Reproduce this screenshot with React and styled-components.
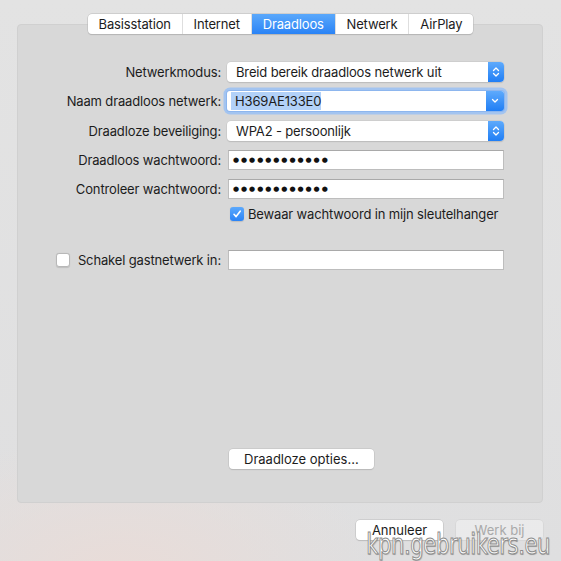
import styled, { createGlobalStyle } from "styled-components";

const GlobalStyle = createGlobalStyle`
  html, body {
    margin: 0;
    padding: 0;
  }
  body {
    font-family: Inter, "Liberation Sans", sans-serif;
    font-size: 13px;
    letter-spacing: -0.15px;
    color: #1c1c1c;
  }
`;

const tabs = ["Basisstation", "Internet", "Draadloos", "Netwerk", "AirPlay"];

function Chevrons({ single }) {
  return (
    <svg width="8" height="12" viewBox="0 0 8 12">
      {single ? (
        <path d="M1.5 4.5 L4 7 L6.5 4.5" fill="none" stroke="#fff" strokeWidth="1.3" strokeLinecap="round" strokeLinejoin="round" />
      ) : (
        <>
          <path d="M1.5 4.5 L4 2 L6.5 4.5" fill="none" stroke="#fff" strokeWidth="1.3" strokeLinecap="round" strokeLinejoin="round" />
          <path d="M1.5 7.5 L4 10 L6.5 7.5" fill="none" stroke="#fff" strokeWidth="1.3" strokeLinecap="round" strokeLinejoin="round" />
        </>
      )}
    </svg>
  );
}

export default function App() {
  return (
    <>
      <GlobalStyle />
      <Window>
        <TabBar>
          {tabs.map((t) => (
            <Tab key={t} $active={t === "Draadloos"}>{t}</Tab>
          ))}
        </TabBar>

        <Panel>
          <Form>
            <Label>Netwerkmodus:</Label>
            <Popup>
              <PopupText>Breid bereik draadloos netwerk uit</PopupText>
              <Arrows><Chevrons /></Arrows>
            </Popup>

            <Label>Naam draadloos netwerk:</Label>
            <Combo>
              <PopupText><Selected>H369AE133E0</Selected></PopupText>
              <Arrows $combo><Chevrons single /></Arrows>
            </Combo>

            <Label>Draadloze beveiliging:</Label>
            <Popup>
              <PopupText>WPA2 - persoonlijk</PopupText>
              <Arrows><Chevrons /></Arrows>
            </Popup>

            <Label>Draadloos wachtwoord:</Label>
            <Field><Dots>●●●●●●●●●●●●</Dots></Field>

            <Label>Controleer wachtwoord:</Label>
            <Field><Dots>●●●●●●●●●●●●</Dots></Field>

            <span />
            <CheckRow>
              <Check $checked>
                <svg width="10" height="10" viewBox="0 0 10 10">
                  <path d="M2 5.3 L4.1 7.6 L8.2 2.2" fill="none" stroke="#fff" strokeWidth="1.6" strokeLinecap="round" strokeLinejoin="round" />
                </svg>
              </Check>
              Bewaar wachtwoord in mijn sleutelhanger
            </CheckRow>

            <GuestLabel>
              <Check />
              <span>Schakel gastnetwerk in:</span>
            </GuestLabel>
            <Field $guest />
          </Form>

          <Footer>
            <Button>Draadloze opties...</Button>
          </Footer>
        </Panel>

        <Actions>
          <Button $wide>Annuleer</Button>
          <Button $wide disabled>Werk bij</Button>
        </Actions>

        <Watermark>kpn.gebruikers.eu</Watermark>
      </Window>
    </>
  );
}

const Window = styled.div`
  position: relative;
  width: 561px;
  height: 561px;
  box-sizing: border-box;
  padding: 14px 18px 0 17px;
  display: flex;
  flex-direction: column;
  background:
    radial-gradient(ellipse 260px 140px at 120px 575px, #e9dcd8 0%, rgba(233, 220, 216, 0) 100%),
    linear-gradient(180deg, #e3e3e3 0%, #dfdfe0 100%);
  overflow: hidden;
`;

const TabBar = styled.div`
  position: relative;
  z-index: 1;
  align-self: center;
  display: flex;
  height: 20px;
  margin-left: 1px;
  margin-bottom: -10px;
  background: #fff;
  border-radius: 4px;
  box-shadow: 0 0 0 0.5px #b9b9b9, 0 1px 1px rgba(0, 0, 0, 0.18);
  overflow: hidden;
`;

const Tab = styled.div`
  display: flex;
  align-items: center;
  padding: 0 10.9px;
  line-height: 20px;
  color: ${(p) => (p.$active ? "#fff" : "#1c1c1c")};
  background: ${(p) => (p.$active ? "linear-gradient(180deg, #5aa8fb 0%, #2a83f6 100%)" : "transparent")};
  border-left: 1px solid #dedede;

  &:first-child {
    border-left: none;
  }
`;

const Panel = styled.div`
  flex: 0 0 479px;
  box-sizing: border-box;
  display: flex;
  flex-direction: column;
  padding: 37px 38px 33px 0;
  background: #d8d8d8;
  border: 1px solid #d0d0d0;
  border-radius: 4px;
`;

const Form = styled.div`
  display: grid;
  grid-template-columns: 1fr 277px;
  grid-auto-rows: 20px;
  column-gap: 6px;
  row-gap: 9.3px;
  align-items: center;

  & > :nth-child(11), & > :nth-child(12) {
    margin-top: -8px;
  }
  & > :nth-child(13), & > :nth-child(14) {
    margin-top: 25px;
  }
`;

const Label = styled.div`
  text-align: right;
  white-space: nowrap;
`;

const GuestLabel = styled.div`
  display: flex;
  align-items: center;
  justify-content: flex-end;
  gap: 8px;
  white-space: nowrap;
`;

const Popup = styled.div`
  display: flex;
  height: 20px;
  background: #fff;
  border-radius: 4px;
  box-shadow: 0 0 0 0.5px #c4c4c4, 0 1px 1px rgba(0, 0, 0, 0.16);
  overflow: hidden;
`;

const Combo = styled(Popup)`
  border-radius: 3px;
  box-shadow: 0 0 0 1px #8db6ee, 0 0 0 3.5px #a3c4f0;
`;

const PopupText = styled.div`
  flex: 1;
  display: flex;
  align-items: center;
  padding-left: 9px;
  white-space: nowrap;
`;

const Selected = styled.span`
  margin-left: -5px;
  padding: 0 0 0 4px;
  background: #b2d1f8;
  line-height: 18px;
`;

const Arrows = styled.div`
  display: flex;
  align-items: center;
  justify-content: center;
  background: linear-gradient(180deg, #5eaafc 0%, #207ef5 100%);
  width: ${(p) => (p.$combo ? "18px" : "16px")};
`;

const Field = styled.div`
  height: 20px;
  box-sizing: border-box;
  margin-left: 1px;
  display: flex;
  align-items: center;
  padding-left: 4px;
  background: #fff;
  border: 1px solid #bdbdbd;
  border-top-color: #a9a9a9;
`;

const Dots = styled.span`
  font-family: "DejaVu Sans", sans-serif;
  font-size: 7px;
  letter-spacing: 1.95px;
  color: #111;
`;

const CheckRow = styled.div`
  display: flex;
  align-items: center;
  gap: 4px;
  padding-left: 3px;
  white-space: nowrap;
`;

const Check = styled.span`
  width: 14px;
  height: 14px;
  flex: none;
  box-sizing: border-box;
  border-radius: 3px;
  display: flex;
  align-items: center;
  justify-content: center;
  background: ${(p) => (p.$checked ? "linear-gradient(180deg, #5ca9fc 0%, #2a83f6 100%)" : "#fff")};
  border: ${(p) => (p.$checked ? "none" : "1px solid #b8b8b8")};
  box-shadow: 0 0.5px 1px rgba(0, 0, 0, 0.12);
`;

const Footer = styled.div`
  margin-top: auto;
  display: grid;
  grid-template-columns: 1fr 277px;
  column-gap: 6px;

  & > * {
    grid-column: 2;
    justify-self: start;
    margin-left: 2px;
  }
`;

const Button = styled.button`
  font: inherit;
  color: ${(p) => (p.disabled ? "#a9a9a9" : "#1c1c1c")};
  height: 20px;
  padding: 0 15px;
  width: ${(p) => (p.$wide ? "87px" : "auto")};
  background: ${(p) => (p.disabled ? "rgba(255,255,255,0.35)" : "#fff")};
  border: none;
  border-radius: 4px;
  box-shadow: ${(p) =>
    p.disabled
      ? "0 0 0 0.5px #d0d0d0"
      : "0 0 0 0.5px #bdbdbd, 0 1px 1px rgba(0, 0, 0, 0.16)"};
  line-height: 20px;
`;

const Actions = styled.div`
  display: flex;
  justify-content: flex-end;
  gap: 13px;
  margin-top: 17px;
`;

const Watermark = styled.div`
  position: absolute;
  right: 11px;
  bottom: 0;
  font-family: "DejaVu Sans Condensed", "DejaVu Sans", sans-serif;
  font-size: 29px;
  font-stretch: condensed;
  letter-spacing: -0.5px;
  color: #fff;
  -webkit-text-stroke: 1px #8c8c8c;
  text-shadow: 1px 1px 1px rgba(0, 0, 0, 0.25);
  transform: scaleX(0.81);
  transform-origin: right center;
  pointer-events: none;
`;
